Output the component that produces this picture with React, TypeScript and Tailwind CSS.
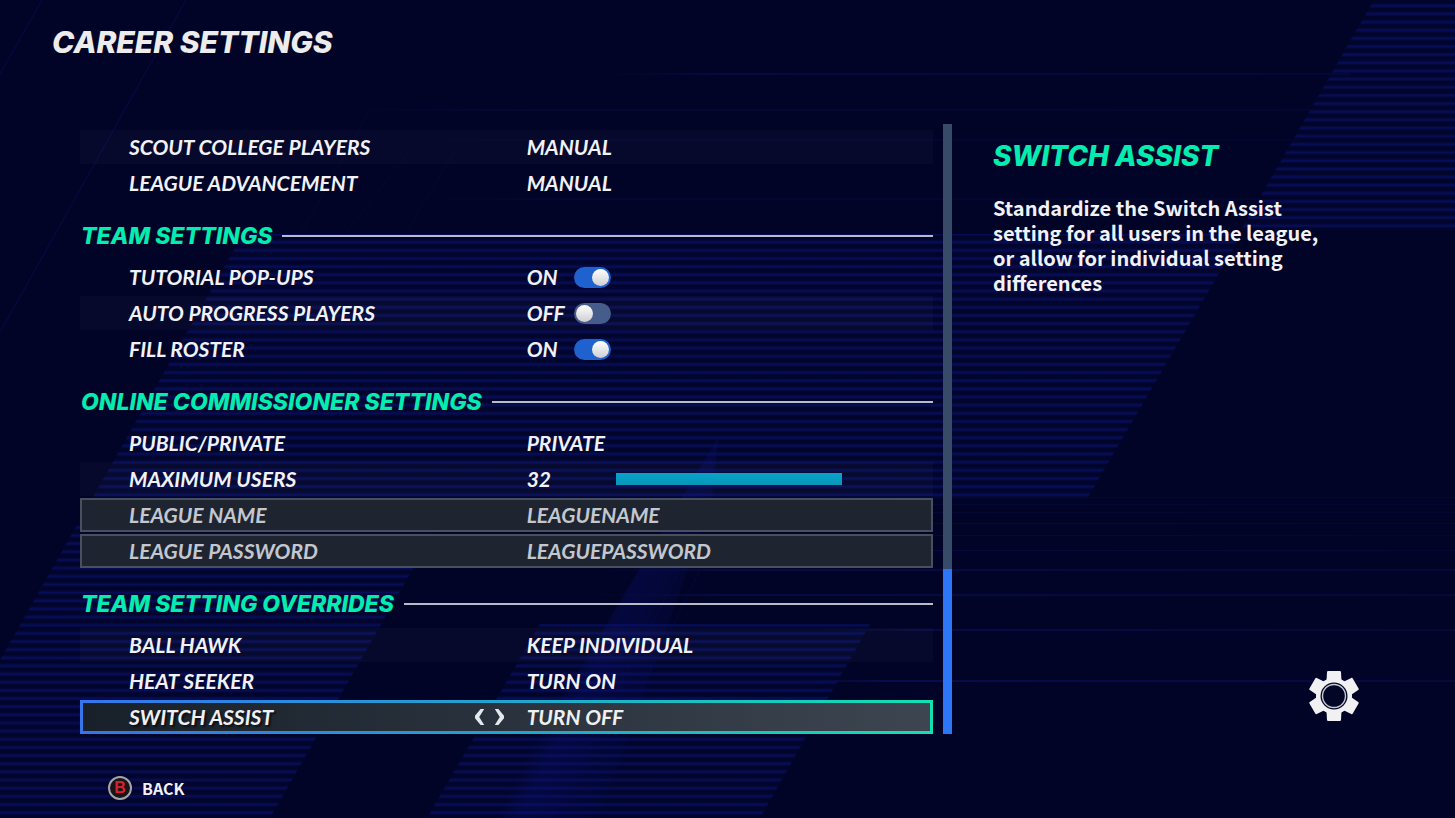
import { useState } from 'react';
import type { ReactNode } from 'react';

type Tone = 'plain' | 'band' | 'locked' | 'active';

const toneClasses: Record<Tone, string> = {
  plain: '',
  band: 'bg-white/[0.025]',
  locked: 'bg-[#1f2530] text-[#c3c7cf] outline-2 -outline-offset-2 outline-[#485060]',
  active:
    'text-[#f0f0f0] font-black [text-shadow:2px_2px_2px_rgba(0,0,0,0.6)] [background:linear-gradient(90deg,#18202a,#3c4550)_padding-box,linear-gradient(90deg,#3674ea,#22a4cc_50%,#12e0b2)_border-box]',
};

function Row({
  id,
  label,
  tone = 'plain',
  arrows,
  children,
}: {
  id: string;
  label: string;
  tone?: Tone;
  arrows?: ReactNode;
  children: ReactNode;
}) {
  return (
    <div
      className={`grid h-[34px] grid-cols-[11fr_10fr] items-center border-[3px] border-transparent font-['Lato',sans-serif] text-[21px] leading-[26px] font-bold italic ${toneClasses[tone]}`}
    >
      <div className="flex items-center justify-between pr-[22px] pl-[46px]">
        <label htmlFor={id}>{label}</label>
        {arrows}
      </div>
      <div className="flex items-center">{children}</div>
    </div>
  );
}

function Choice({
  id,
  value,
  options,
  onChange,
}: {
  id: string;
  value: string;
  options: string[];
  onChange: (v: string) => void;
}) {
  return (
    <select
      id={id}
      value={value}
      onChange={(e) => onChange(e.target.value)}
      className="w-64 appearance-none bg-transparent p-0 outline-none"
    >
      {options.map((o) => (
        <option key={o} className="bg-[#1f2530]">
          {o}
        </option>
      ))}
    </select>
  );
}

function ChoiceRow({
  id,
  label,
  tone,
  initial,
  options,
}: {
  id: string;
  label: string;
  tone?: Tone;
  initial: string;
  options: string[];
}) {
  const [value, setValue] = useState(initial);
  return (
    <Row id={id} label={label} tone={tone}>
      <Choice id={id} value={value} options={options} onChange={setValue} />
    </Row>
  );
}

function ToggleRow({ id, label, tone, initial }: { id: string; label: string; tone?: Tone; initial: boolean }) {
  const [on, setOn] = useState(initial);
  return (
    <Row id={id} label={label} tone={tone}>
      <span className="w-[47px]">{on ? 'ON' : 'OFF'}</span>
      <input
        id={id}
        type="checkbox"
        role="switch"
        checked={on}
        onChange={() => setOn(!on)}
        className="flex h-[21px] w-[37px] appearance-none items-center rounded-full bg-[#465c8a] px-[2px] before:size-[17px] before:rounded-full before:bg-linear-to-b before:from-white before:to-[#cfcfd4] checked:justify-end checked:bg-[#1f62cf]"
      />
    </Row>
  );
}

function SliderRow() {
  const [users, setUsers] = useState(32);
  const filled = ((users - 2) / 30) * 100;
  return (
    <Row id="max-users" label="MAXIMUM USERS" tone="band">
      <output htmlFor="max-users" className="w-[89px]">
        {users}
      </output>
      <input
        id="max-users"
        type="range"
        min={2}
        max={32}
        value={users}
        onChange={(e) => setUsers(Number(e.target.value))}
        style={{ backgroundSize: `${filled}% 100%` }}
        className="h-3 w-[226px] appearance-none bg-[#1a2448] bg-linear-to-b from-[#08a4cc] to-[#0a94b8] bg-no-repeat [&::-webkit-slider-thumb]:size-3 [&::-webkit-slider-thumb]:appearance-none [&::-webkit-slider-thumb]:bg-transparent"
      />
    </Row>
  );
}

function TextRow({ id, label, value }: { id: string; label: string; value: string }) {
  return (
    <Row id={id} label={label} tone="locked">
      <input id={id} type="text" readOnly defaultValue={value} className="w-full bg-transparent p-0 italic outline-none" />
    </Row>
  );
}

const assistOptions = ['KEEP INDIVIDUAL', 'TURN ON', 'TURN OFF'];

function SwitchAssistRow() {
  const [index, setIndex] = useState(2);
  const step = (d: number) => setIndex((index + d + assistOptions.length) % assistOptions.length);
  return (
    <Row
      id="switch-assist"
      label="SWITCH ASSIST"
      tone="active"
      arrows={
        <span className="flex gap-[9px]">
          <button type="button" aria-label="Previous" onClick={() => step(-1)}>
            <svg width="11" height="16" viewBox="0 0 11 16" fill="#e4e9ee">
              <path d="M6.600 0h3.600L5.200 8l5 8H6.600L1 9.200V6.800z" />
            </svg>
          </button>
          <button type="button" aria-label="Next" onClick={() => step(1)}>
            <svg width="11" height="16" viewBox="0 0 11 16" fill="#e4e9ee">
              <path d="M4.400 0H.8l5 8-5 8h3.600L10 9.200V6.800z" />
            </svg>
          </button>
        </span>
      }
    >
      <Choice
        id="switch-assist"
        value={assistOptions[index]}
        options={assistOptions}
        onChange={(v) => setIndex(assistOptions.indexOf(v))}
      />
    </Row>
  );
}

function Section({ title, children }: { title?: string; children: ReactNode }) {
  return (
    <section>
      {title && (
        <div className="flex items-center gap-[10px] pt-[23px] pb-[11px] pl-px">
          <h2 className="font-['Inter',sans-serif] text-[23px] leading-[26px] font-extrabold whitespace-nowrap text-[#04ecb0] italic">
            {title}
          </h2>
          <div className="h-[2px] flex-1 bg-[#b9bcc8]" />
        </div>
      )}
      <div className="flex flex-col gap-[2px]">{children}</div>
    </section>
  );
}

const toothAngles = [0, 60, 120, 180, 240, 300];

function Gear() {
  return (
    <svg width="50" height="50" viewBox="-25 -25 50 50" aria-hidden="true">
      <g fill="#f1f1f3">
        <circle r="18" />
        {toothAngles.map((a) => (
          <path
            key={a}
            transform={`rotate(${a})`}
            d="M-5.800-25H5.800Q6.900-25 7-23.900L7.400-16.500Q7.600-15.400 9.500-14.600H-9.500Q-7.600-15.400-7.400-16.500L-7-23.900Q-6.900-25-5.800-25z"
          />
        ))}
      </g>
      <circle r="13.500" fill="#040720" />
      <circle r="11.500" fill="#030626" stroke="#c9cad6" strokeWidth="1.400" />
    </svg>
  );
}

function Backdrop() {
  return (
    <svg
      className="absolute inset-0 -z-10 size-full"
      viewBox="0 0 1455 818"
      preserveAspectRatio="none"
      aria-hidden="true"
    >
      <defs>
        <linearGradient id="line" x1="0" y1="0" x2="0" y2="1">
          <stop offset="0" stopColor="#070e5a" stopOpacity="0" />
          <stop offset="0.500" stopColor="#070e5e" />
          <stop offset="1" stopColor="#070e5a" stopOpacity="0" />
        </linearGradient>
        <pattern id="stripes" width="20" height="8.150" y="1.500" patternUnits="userSpaceOnUse">
          <rect width="20" height="8.150" fill="#02052b" />
          <rect y="1.800" width="20" height="5" fill="url(#line)" />
        </pattern>
        <linearGradient id="beam" gradientUnits="userSpaceOnUse" x1="560" y1="690" x2="650" y2="735">
          <stop offset="0" stopColor="#0a1280" stopOpacity="0" />
          <stop offset="0.200" stopColor="#0a1280" stopOpacity="0.260" />
          <stop offset="1" stopColor="#0a1280" stopOpacity="0" />
        </linearGradient>
        <linearGradient id="fade" x1="0" y1="0" x2="1" y2="0">
          <stop offset="0" stopColor="#080e50" stopOpacity="0" />
          <stop offset="0.150" stopColor="#080e50" />
          <stop offset="1" stopColor="#080e50" stopOpacity="0.600" />
        </linearGradient>
      </defs>
      <rect width="1455" height="818" fill="#020427" />
      <g fill="url(#stripes)">
        <path d="M1374 0H1455V230H1241z" />
        <path d="M243 234H1242L1087 499H453L270 818H0V660z" />
        <path d="M540 624H870L760 818H427z" />
      </g>
      <path d="M718 438L712 500L600 818H490z" fill="url(#beam)" />
      <g fill="none" stroke="#0a1170">
        <path d="M42 0L0 74M186 0L34 272L0 332" opacity="0.500" />
        <path d="M665 570L535 818M680 570L550 818M700 570L578 818" opacity="0.300" />
        <path d="M370 110L300 235M410 150L345 235M455 150L405 235" opacity="0.200" />
      </g>
      <g fill="url(#fade)">
        <rect x="610" y="73" width="740" height="2" opacity="0.600" />
        <rect x="365" y="109" width="950" height="2" opacity="0.350" />
        <rect x="440" y="139" width="860" height="2" opacity="0.250" />
        <rect x="440" y="198" width="820" height="2" opacity="0.300" />
        <rect x="820" y="497" width="640" height="1" opacity="0.400" />
        <rect x="820" y="504" width="640" height="1" opacity="0.400" />
        <rect x="820" y="512" width="640" height="1" opacity="0.400" />
        <rect x="820" y="523" width="640" height="1" opacity="0.500" />
        <rect x="820" y="535" width="640" height="1" opacity="0.500" />
        <rect x="820" y="550" width="640" height="1" opacity="0.600" />
        <rect x="600" y="569" width="860" height="2" opacity="0.700" />
        <rect x="600" y="594" width="860" height="2" opacity="0.700" />
        <rect x="820" y="629" width="640" height="2" opacity="0.700" />
        <rect x="780" y="680" width="680" height="2" opacity="0.900" />
      </g>
    </svg>
  );
}

export default function App() {
  return (
    <div className="relative isolate flex min-h-screen flex-col overflow-hidden bg-[#020427] font-['Noto_Sans_CJK_JP',sans-serif] text-[#f1f2f8]">
      <Backdrop />
      <header className="px-[52px] pt-5 pb-[60px]">
        <h1 className="font-['Inter',sans-serif] text-[30px] leading-[44px] font-extrabold text-[#ececec] italic">
          CAREER SETTINGS
        </h1>
      </header>
      <div className="flex pl-20">
        <main className="flex-1 pt-[6px]">
          <Section>
            <ChoiceRow id="scout" label="SCOUT COLLEGE PLAYERS" tone="band" initial="MANUAL" options={['MANUAL', 'AUTO']} />
            <ChoiceRow id="advancement" label="LEAGUE ADVANCEMENT" initial="MANUAL" options={['MANUAL', 'AUTO']} />
          </Section>
          <Section title="TEAM SETTINGS">
            <ToggleRow id="tutorial" label="TUTORIAL POP-UPS" initial={true} />
            <ToggleRow id="progress" label="AUTO PROGRESS PLAYERS" tone="band" initial={false} />
            <ToggleRow id="fill-roster" label="FILL ROSTER" initial={true} />
          </Section>
          <Section title="ONLINE COMMISSIONER SETTINGS">
            <ChoiceRow id="privacy" label="PUBLIC/PRIVATE" initial="PRIVATE" options={['PUBLIC', 'PRIVATE']} />
            <SliderRow />
            <TextRow id="league-name" label="LEAGUE NAME" value="LEAGUENAME" />
            <TextRow id="league-password" label="LEAGUE PASSWORD" value="LEAGUEPASSWORD" />
          </Section>
          <Section title="TEAM SETTING OVERRIDES">
            <ChoiceRow id="ball-hawk" label="BALL HAWK" tone="band" initial="KEEP INDIVIDUAL" options={assistOptions} />
            <ChoiceRow id="heat-seeker" label="HEAT SEEKER" initial="TURN ON" options={assistOptions} />
            <SwitchAssistRow />
          </Section>
        </main>
        <div className="ml-[10px] flex w-[9px] flex-col justify-end bg-[#374a67]">
          <div className="h-[27%] bg-[#2d76f8]" />
        </div>
        <aside className="ml-[41px] flex w-[462px] flex-col items-start justify-between pt-3 pr-24 pb-[13px]">
          <div>
            <h2 className="font-['Inter',sans-serif] text-[28px] leading-10 font-extrabold text-[#04ecb0] italic">
              SWITCH ASSIST
            </h2>
            <p className="mt-[19px] max-w-[340px] text-xl leading-[25px] font-bold">
              Standardize the Switch Assist setting for all users in the league, or allow for individual setting
              differences
            </p>
          </div>
          <div className="self-end">
            <Gear />
          </div>
        </aside>
      </div>
      <footer className="px-[108px] pt-[42px]">
        <button type="button" className="flex items-center gap-[10px]">
          <span className="flex size-6 items-center justify-center rounded-full border-2 border-[#a5a5a8] bg-[#17141a] font-['Liberation_Sans',sans-serif] text-base leading-none font-bold text-[#dc1f2c]">
            B
          </span>
          <span className="text-base leading-6 font-bold">BACK</span>
        </button>
      </footer>
    </div>
  );
}
